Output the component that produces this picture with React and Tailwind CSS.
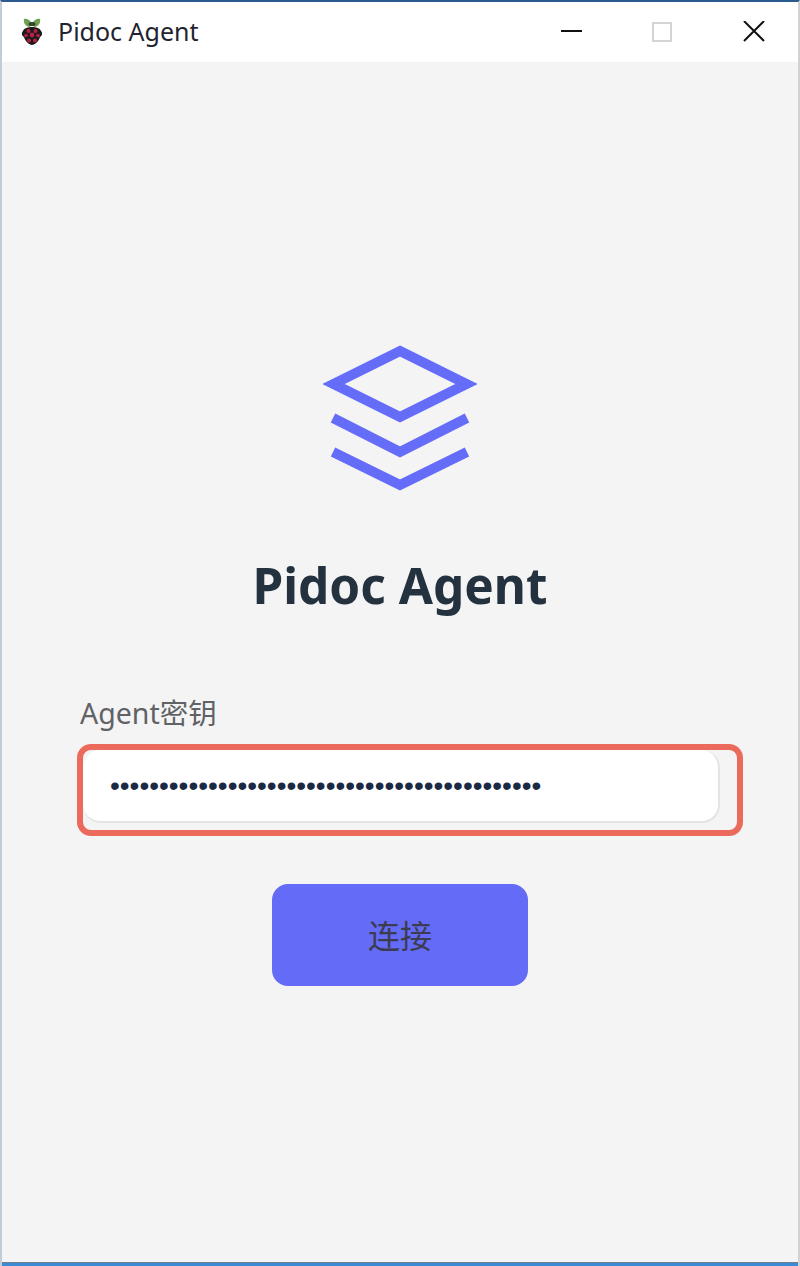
const fontStack = "font-['Noto_Sans','Noto_Sans_CJK_SC',sans-serif]";

function RaspberryIcon() {
  return (
    <svg width="24" height="28" viewBox="0 0 24 28">
      <path d="M12 5 C9 1 6 0 4 1 C3 5 6 9 10 9 Z" fill="#6f9e55" />
      <path d="M12 5 C15 1 18 0 20 1 C21 5 18 9 14 9 Z" fill="#6f9e55" />
      <ellipse cx="12" cy="6" rx="3.5" ry="2" fill="#35452a" />
      <path d="M12 9 C16 9 20 10 21 13 C23 15 22 18 20 19 C19 23 15 27 12 27 C9 27 5 23 4 19 C2 18 1 15 3 13 C4 10 8 9 12 9 Z" fill="#1d1a1e" />
      <circle cx="8.5" cy="13" r="2" fill="#b8203f" />
      <circle cx="15.5" cy="13" r="2" fill="#b8203f" />
      <circle cx="12" cy="17" r="2.4" fill="#b8203f" />
      <circle cx="6" cy="17.5" r="1.8" fill="#b8203f" />
      <circle cx="18" cy="17.5" r="1.8" fill="#b8203f" />
      <circle cx="9" cy="22.5" r="1.9" fill="#b8203f" />
      <circle cx="15" cy="22.5" r="1.9" fill="#b8203f" />
    </svg>
  );
}

function LayersLogo() {
  return (
    <svg width="156" height="146" viewBox="0 0 156 146" fill="none" stroke="#646cf8" strokeWidth="10">
      <path d="M78 6 L144.5 39 L78 72 L11.5 39 Z" />
      <path d="M11 73 L78 107 L145 73" />
      <path d="M11 107 L78 140 L145 107" />
    </svg>
  );
}

export default function App() {
  return (
    <div className={`w-[800px] h-[1266px] flex flex-col bg-[#f4f4f4] border-t-2 border-t-[#2b5a8e] border-l-2 border-l-[#c3ccd6] border-r-2 border-r-[#d2d2d2] ${fontStack}`}>
      {/* title bar */}
      <div className="h-[60px] shrink-0 bg-white flex items-center">
        <div className="ml-[18px] w-6 flex justify-center">
          <RaspberryIcon />
        </div>
        <span className="ml-[14px] mb-[2px] text-[25px] leading-none text-[#1f2430]">Pidoc Agent</span>
        <div className="ml-auto flex items-center">
          <svg width="22" height="22" viewBox="0 0 22 22" className="mr-[69px]">
            <path d="M0 10 H21" stroke="#111" strokeWidth="2" />
          </svg>
          <div className="w-[20px] h-[20px] border-2 border-[#d4d4d4] mr-[71px]" />
          <svg width="22" height="22" viewBox="0 0 22 22" className="mr-[33px]">
            <path d="M1 0 L21 20 M21 0 L1 20" stroke="#111" strokeWidth="2" />
          </svg>
        </div>
      </div>

      {/* login form */}
      <div className="flex-1 flex flex-col">
        <div className="flex justify-center mt-[283px]">
          <LayersLogo />
        </div>
        <h1 className="mt-[64px] text-center text-[49.5px] leading-[60px] font-bold text-[#243240]">Pidoc Agent</h1>
        <label className="mt-[78px] ml-[78px] text-[28.5px] leading-[40px] text-[#606266]">Agent密钥</label>
        <div className="mt-[11px] ml-[75px] w-[666px] h-[92px] rounded-[14px] border-[6px] border-[#ec6a5c]">
          <input
            type="password"
            readOnly
            value="00000000000000000000000000000000000000000000"
            className="block w-[637px] h-[73px] bg-white rounded-[18px] border-b-2 border-r-2 border-[#e4e4e4] pl-[27px] font-['Liberation_Sans',sans-serif] text-[28px] text-[#1b2a44] outline-none"
          />
        </div>
        <button className="mt-[48px] mx-auto w-[256px] h-[102px] pt-[2px] rounded-[16px] bg-[#636bf7] text-[32px] text-[#3c3c50]">
          连接
        </button>
      </div>

      {/* window bottom edge */}
      <div className="shrink-0 h-px bg-[#6f7f8c]" />
      <div className="shrink-0 h-[3px] bg-[#3a8ad6]" />
    </div>
  );
}
